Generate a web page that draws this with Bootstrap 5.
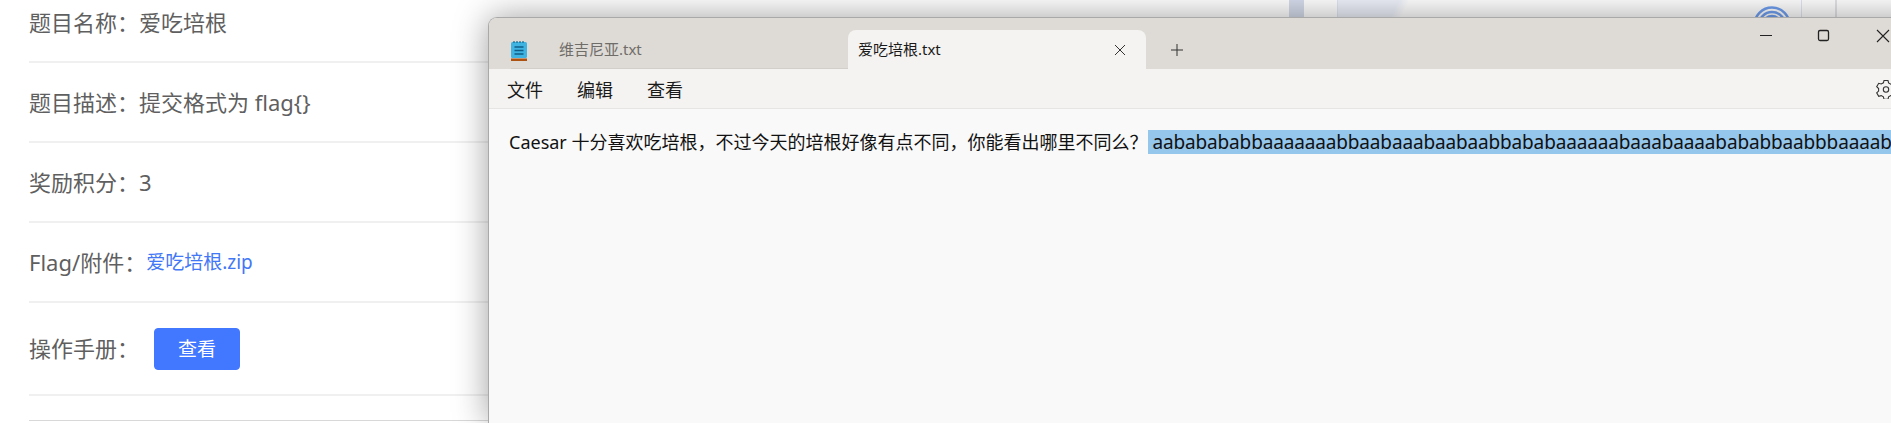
<!DOCTYPE html>
<html lang="zh-CN">
<head>
<meta charset="utf-8">
<title>爱吃培根</title>
<link href="https://cdn.jsdelivr.net/npm/bootstrap@5.3.0/dist/css/bootstrap.min.css" rel="stylesheet">
<style>
html,body{height:423px;overflow:hidden;background:#fff;}
body{position:relative;font-family:"Noto Sans","Noto Sans CJK SC",sans-serif;}
.task-list{margin:-17px 0 0 29px;color:#5f5f5f;font-size:22px;}
.task-row{height:80px;border-bottom:2px solid #f0f0f0;}
.task-row-tall{height:93px;}
.task-rule{height:1px;margin-top:24px;background:#d8d8d8;}
.task-link{font-size:19px;color:#4277f6;text-decoration:none;}
.task-btn{width:86px;height:42px;margin-left:15px;padding:0;font-size:19px;background:#4277ff;border-color:#4277ff;border-radius:4px;line-height:36px;}
.backdrop-item{position:absolute;top:0;height:17px;}
.bd-strip{left:1289px;width:15px;background:#d6dcec;}
.bd-panel{left:1337px;width:465px;border:1px solid #dfe6f8;border-width:0 1px;background:linear-gradient(115deg,#eef1fb 0,#eef1fb 55px,#fff 65px);}
.bd-line{left:1835px;width:2px;background:#e2e2e8;}
.bd-ring{left:1752px;width:40px;}
.np-window{position:absolute;left:488px;top:17px;width:1500px;height:406px;background:#f9f9f9;border:1px solid #a9a9a9;border-width:1px 0 0 1px;border-radius:9px 0 0 0;box-shadow:0 0 34px rgba(0,0,0,.38);overflow:hidden;color:#1a1a1a;}
.np-title{height:51px;background:#dedad5;padding-top:12px;}
.np-icon{margin-left:22px;width:16px;height:21px;margin-top:10px;}
.np-tab{height:39px;font-size:15px;}
.np-tab-off{width:337px;padding-left:48px;color:#6f6d6a;border-bottom:1px solid #d2cfca;margin-left:-16px;}
.np-tab-on{width:298px;padding-left:10px;padding-right:20px;background:#f4f3f1;border-radius:8px 8px 0 0;}
.np-plus{width:62px;}
.np-ctrl{position:absolute;top:0;}
.np-menu{height:40px;background:#f4f3f1;border-bottom:1px solid #e6e5e3;font-size:18px;padding:3px 0 0 18px;gap:34px;}
.np-gear{position:absolute;left:1387px;top:61px;}
.np-text{padding:21px 0 0 20px;font-size:18px;line-height:24px;white-space:nowrap;color:#111;}
.np-sel{background:#95c6ec;padding:0 4px;margin-left:1px;display:inline-block;font-size:19px;letter-spacing:-.15px;}
</style>
</head>
<body>
<div class="task-list">
  <div class="task-row d-flex align-items-center">题目名称：爱吃培根</div>
  <div class="task-row d-flex align-items-center">题目描述：提交格式为 flag{}</div>
  <div class="task-row d-flex align-items-center">奖励积分：3</div>
  <div class="task-row d-flex align-items-center">Flag/附件：<a class="task-link" href="#">爱吃培根.zip</a></div>
  <div class="task-row task-row-tall d-flex align-items-center">操作手册：<button type="button" class="btn btn-primary task-btn">查看</button></div>
  <div class="task-rule"></div>
</div>

<div class="backdrop-item bd-strip"></div>
<div class="backdrop-item bd-panel"></div>
<div class="backdrop-item bd-line"></div>
<svg class="backdrop-item bd-ring" viewBox="0 0 40 17" fill="none" stroke="#6f9ff0" stroke-width="2.500"><circle cx="20" cy="25" r="17.500"/><circle cx="20" cy="25" r="13"/><circle cx="20" cy="25" r="9"/></svg>

<div class="np-window">
  <div class="np-title d-flex align-items-start">
    <svg class="np-icon flex-shrink-0" viewBox="0 0 16 21">
      <rect x="0" y="2" width="16" height="16" rx="1.500" fill="#3fb3e2"/>
      <path d="M3 1v2M6 1v2M9 1v2M12 1v2" stroke="#156a8e" stroke-width="1.200"/>
      <path d="M3.500 7h9M3.500 10.500h9M3.500 14h9" stroke="#0f5d86" stroke-width="1.400"/>
      <rect x="0" y="18.500" width="16" height="2.500" fill="#ad5211"/>
    </svg>
    <div class="np-tab np-tab-off d-flex align-items-center">维吉尼亚.txt</div>
    <div class="np-tab np-tab-on d-flex align-items-center justify-content-between">
      <span>爱吃培根.txt</span>
      <svg width="12" height="12" viewBox="0 0 12 12" stroke="#333" fill="none"><path d="M1 1l10 10M11 1L1 11"/></svg>
    </div>
    <div class="np-tab np-plus d-flex align-items-center justify-content-center">
      <svg width="12" height="12" viewBox="0 0 12 12" stroke="#333" fill="none"><path d="M6 0v12M0 6h12"/></svg>
    </div>
    <svg class="np-ctrl" style="left:1271px" width="140" height="50" viewBox="0 0 140 50" fill="none" stroke="#222">
      <path d="M0 17.500h12"/>
      <rect x="58.500" y="12.500" width="10" height="10" rx="1.500" stroke-width="1.300"/>
      <path d="M117 12l12 12M129 12l-12 12" stroke-width="1.100"/>
    </svg>
  </div>
  <div class="np-menu d-flex align-items-center">
    <span>文件</span><span>编辑</span><span>查看</span>
  </div>
  <svg class="np-gear" width="20" height="20" viewBox="0 0 20 20" fill="none" stroke="#333" stroke-width="1.100">
    <path d="M8 1.500h4l.6 2.500 2.200 1.200 2.500-.7 2 3.400-1.900 1.800v2.400l1.900 1.800-2 3.400-2.500-.7-2.200 1.200-.6 2.500H8l-.6-2.500-2.200-1.200-2.500.7-2-3.400 1.900-1.800V9.500L.7 7.700l2-3.400 2.500.7L7.400 3.800z"/>
    <circle cx="10" cy="10.500" r="2.700"/>
  </svg>
  <div class="np-text">Caesar 十分喜欢吃培根，不过今天的培根好像有点不同，你能看出哪里不同么？<span class="np-sel">aababababbaaaaaaabbaabaaabaabaabbababaaaaaabaaabaaaabababbaabbbaaaab</span></div>
</div>
<script src="https://cdn.jsdelivr.net/npm/bootstrap@5.3.0/dist/js/bootstrap.bundle.min.js"></script>
</body>
</html>
